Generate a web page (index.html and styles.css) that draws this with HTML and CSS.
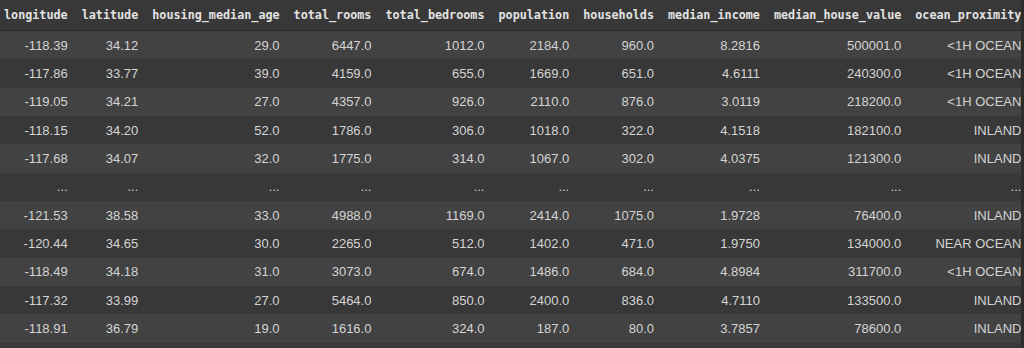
FILE: index.html
```html
<!DOCTYPE html>
<html lang="en">
<head>
    <meta charset="UTF-8">
    <title>housing.csv</title>
    <link rel="stylesheet" href="styles.css">
</head>
<body>
    <div class="frame">
        <table class="dataframe">
            <thead>
                <tr>
                    <th>longitude</th>
                    <th>latitude</th>
                    <th>housing_median_age</th>
                    <th>total_rooms</th>
                    <th>total_bedrooms</th>
                    <th>population</th>
                    <th>households</th>
                    <th>median_income</th>
                    <th>median_house_value</th>
                    <th>ocean_proximity</th>
                </tr>
            </thead>
            <tbody>
                <tr><td>-118.39</td><td>34.12</td><td>29.0</td><td>6447.0</td><td>1012.0</td><td>2184.0</td><td>960.0</td><td>8.2816</td><td>500001.0</td><td>&lt;1H OCEAN</td></tr>
                <tr><td>-117.86</td><td>33.77</td><td>39.0</td><td>4159.0</td><td>655.0</td><td>1669.0</td><td>651.0</td><td>4.6111</td><td>240300.0</td><td>&lt;1H OCEAN</td></tr>
                <tr><td>-119.05</td><td>34.21</td><td>27.0</td><td>4357.0</td><td>926.0</td><td>2110.0</td><td>876.0</td><td>3.0119</td><td>218200.0</td><td>&lt;1H OCEAN</td></tr>
                <tr><td>-118.15</td><td>34.20</td><td>52.0</td><td>1786.0</td><td>306.0</td><td>1018.0</td><td>322.0</td><td>4.1518</td><td>182100.0</td><td>INLAND</td></tr>
                <tr><td>-117.68</td><td>34.07</td><td>32.0</td><td>1775.0</td><td>314.0</td><td>1067.0</td><td>302.0</td><td>4.0375</td><td>121300.0</td><td>INLAND</td></tr>
                <tr class="gap"><td>...</td><td>...</td><td>...</td><td>...</td><td>...</td><td>...</td><td>...</td><td>...</td><td>...</td><td>...</td></tr>
                <tr><td>-121.53</td><td>38.58</td><td>33.0</td><td>4988.0</td><td>1169.0</td><td>2414.0</td><td>1075.0</td><td>1.9728</td><td>76400.0</td><td>INLAND</td></tr>
                <tr><td>-120.44</td><td>34.65</td><td>30.0</td><td>2265.0</td><td>512.0</td><td>1402.0</td><td>471.0</td><td>1.9750</td><td>134000.0</td><td>NEAR OCEAN</td></tr>
                <tr><td>-118.49</td><td>34.18</td><td>31.0</td><td>3073.0</td><td>674.0</td><td>1486.0</td><td>684.0</td><td>4.8984</td><td>311700.0</td><td>&lt;1H OCEAN</td></tr>
                <tr><td>-117.32</td><td>33.99</td><td>27.0</td><td>5464.0</td><td>850.0</td><td>2400.0</td><td>836.0</td><td>4.7110</td><td>133500.0</td><td>INLAND</td></tr>
                <tr><td>-118.91</td><td>36.79</td><td>19.0</td><td>1616.0</td><td>324.0</td><td>187.0</td><td>80.0</td><td>3.7857</td><td>78600.0</td><td>INLAND</td></tr>
            </tbody>
        </table>
    </div>
</body>
</html>
```

FILE: styles.css
```css
body {
    margin: 0;
    padding: 0;
    background-color: #2d2d2d;
    font-family: 'Liberation Sans', Arial, sans-serif;
}

.frame {
    width: 1021px;
    height: 348px;
    overflow: hidden;
    background-color: #383838;
}

.dataframe {
    border-collapse: collapse;
    white-space: nowrap;
    color: #d4d4d4;
}

.dataframe th {
    font-family: 'DejaVu Sans Mono', 'Liberation Mono', monospace;
    font-size: 11.75px;
    font-weight: bold;
    color: #e3e3e3;
    text-align: right;
    height: 30px;
    padding: 0 7px;
    background-color: #383838;
    border-bottom: 1px solid #2b2b2b;
}

.dataframe td {
    font-size: 13px;
    text-align: right;
    height: 28.33px;
    padding: 0 7px;
}

.dataframe th:first-child,
.dataframe td:first-child {
    padding-left: 4px;
}

.dataframe tbody tr:nth-child(odd) {
    background-color: #424242;
}

.dataframe tbody tr:nth-child(even) {
    background-color: #383838;
}
```
